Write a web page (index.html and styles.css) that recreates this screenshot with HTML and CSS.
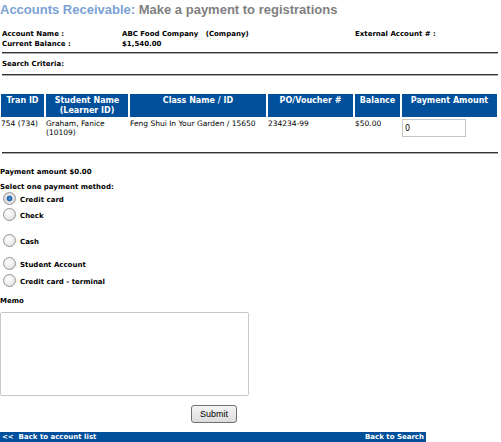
FILE: index.html
```html
<!DOCTYPE html>
<html>
<head>
<meta charset="utf-8">
<link rel="stylesheet" href="styles.css">
</head>
<body>
<div class="page">
  <h1 class="title"><span class="t1">Accounts Receivable:</span> <span class="t2">Make a payment to registrations</span></h1>
  <div class="info">
    <div class="info-row">
      <span class="lbl">Account Name :</span>
      <span class="val">ABC Food Company &nbsp; (Company)</span>
      <span class="ext">External Account # :</span>
    </div>
    <div class="info-row">
      <span class="lbl">Current Balance :</span>
      <span class="val">$1,540.00</span>
    </div>
  </div>
  <div class="rule rule-1"></div>
  <div class="search">Search Criteria:</div>
  <div class="rule rule-2"></div>
  <table class="grid">
    <thead>
      <tr>
        <th class="c1">Tran ID</th>
        <th class="c2">Student Name<br>(Learner ID)</th>
        <th class="c3">Class Name / ID</th>
        <th class="c4">PO/Voucher #</th>
        <th class="c5">Balance</th>
        <th class="c6">Payment Amount</th>
      </tr>
    </thead>
    <tbody>
      <tr>
        <td>754 (734)</td>
        <td>Graham, Fanice<br>(10109)</td>
        <td>Feng Shui In Your Garden / 15650</td>
        <td>234234-99</td>
        <td>$50.00</td>
        <td><input class="amt" type="text" value="0"></td>
      </tr>
    </tbody>
  </table>
  <div class="rule rule-3"></div>
  <div class="payamt">Payment amount $0.00</div>
  <div class="select">Select one payment method:</div>
  <label class="opt o1"><input type="radio" name="pm" checked><span>Credit card</span></label>
  <label class="opt o2"><input type="radio" name="pm"><span>Check</span></label>
  <label class="opt o3"><input type="radio" name="pm"><span>Cash</span></label>
  <label class="opt o4"><input type="radio" name="pm"><span>Student Account</span></label>
  <label class="opt o5"><input type="radio" name="pm"><span>Credit card - terminal</span></label>
  <div class="memo">Memo</div>
  <textarea class="memo-box"></textarea>
  <div class="actions"><button class="submit">Submit</button></div>
  <div class="footer"><span>&lt;&lt; &nbsp;Back to account list</span><span>Back to Search</span></div>
</div>
</body>
</html>
```
FILE: styles.css
```css
html, body { margin: 0; padding: 0; background: #fff; }
body { font-family: "DejaVu Sans", Verdana, sans-serif; color: #000; }
.page { width: 501px; height: 442px; display: flex; flex-direction: column; overflow: hidden; }
.title { margin: 0; padding: 2px 0 0 0; font-family: "Liberation Sans", Arial, sans-serif; font-size: 13px; font-weight: bold; line-height: 15px; height: 18px; flex: none; }
.t1 { color: #7ba2d4; }
.t2 { color: #7f7f7f; }
.info { margin-top: 9px; padding-left: 2px; font-size: 7px; font-weight: bold; }
.info-row { display: flex; height: 10px; line-height: 10px; }
.lbl { width: 120px; }
.val { width: 233px; white-space: pre; }
.rule { height: 0; border-top: 1px solid #333; border-bottom: 1px solid #aaa; margin-left: 2px; width: 496px; flex: none; }
.rule-1 { margin-top: 3px; }
.search { margin-top: 5px; padding-left: 2px; font-size: 7px; font-weight: bold; height: 10px; line-height: 10px; flex: none; }
.rule-2 { margin-top: 5px; }
.grid { margin-top: 18px; margin-left: -1px; border-collapse: separate; border-spacing: 2px 0; width: 500px; font-size: 7.5px; table-layout: fixed; flex: none; }
.grid th { background: #00509b; color: #fff; font-size: 8px; font-weight: bold; line-height: 10px; padding: 2px 1px 1px; text-align: center; vertical-align: top; height: 19px; }
.c1 { width: 41px; } .c2 { width: 80px; } .c3 { width: 134px; } .c4 { width: 83px; } .c5 { width: 43px; } .c6 { width: 93px; }
.grid td { vertical-align: top; padding: 2px 0 0 0; line-height: 9px; height: 32px; }
.amt { width: 58px; height: 14px; margin: 0; padding: 1px 2px; border: 1px solid #c5c5c5; font-family: "DejaVu Sans", Verdana, sans-serif; font-size: 8px; box-sizing: content-box; }
.rule-3 { margin-top: 1px; }
.payamt { margin-top: 13px; font-size: 7px; font-weight: bold; height: 10px; line-height: 10px; flex: none; }
.select { margin-top: 5px; font-size: 7px; font-weight: bold; height: 10px; line-height: 10px; flex: none; }
.opt { display: flex; align-items: center; font-size: 7px; font-weight: bold; height: 16px; flex: none; }
.opt input { appearance: none; -webkit-appearance: none; width: 13px; height: 13px; margin: 0 4px 0 3px; border-radius: 50%; border: 1px solid #949494; background: radial-gradient(circle at 40% 35%, #fff 0%, #ececec 55%, #cfcfcf 100%); box-sizing: border-box; flex: none; }
.opt input:checked { background: radial-gradient(circle at 50% 50%, #4a9be0 0%, #1f5fa8 32%, #e8e8e8 42%, #d0d0d0 100%); }
.opt span { padding-top: 4px; }
.o1 { margin-top: -2px; }
.o3 { margin-top: 10px; }
.o4 { margin-top: 7px; }
.o5 { margin-top: 1px; }
.memo { margin-top: 8px; font-size: 7px; font-weight: bold; height: 10px; line-height: 10px; flex: none; }
.memo-box { margin-top: 6px; width: 249px; height: 84px; box-sizing: border-box; border: 1px solid #c8c8c8; border-radius: 2px; resize: none; padding: 0; flex: none; }
.actions { margin-top: 9px; padding-left: 191px; display: flex; flex: none; }
.submit { width: 46px; height: 18px; padding: 0; font-family: "Liberation Sans", Arial, sans-serif; font-size: 9px; color: #000; border: 1px solid #707070; border-radius: 3px; background: linear-gradient(#f4f4f4, #dcdcdc); }
.footer { margin-top: 9px; width: 426px; height: 10px; background: #00509b; color: #fff; font-size: 7px; font-weight: bold; line-height: 10px; display: flex; justify-content: space-between; padding: 0 2px; box-sizing: border-box; flex: none; }
```
